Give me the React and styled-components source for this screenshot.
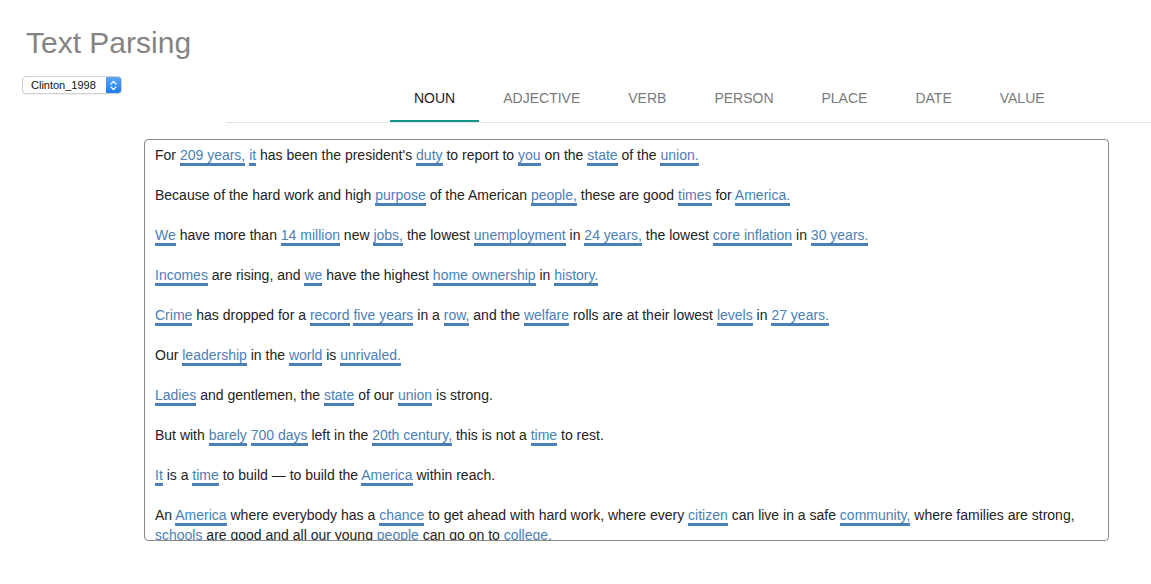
import React from 'react';
import styled, { createGlobalStyle } from 'styled-components';

const GlobalStyle = createGlobalStyle`
  html, body {
    margin: 0;
    padding: 0;
    background: #fff;
    font-family: "Liberation Sans", Arial, Helvetica, sans-serif;
  }
`;

const TABS = ['NOUN', 'ADJECTIVE', 'VERB', 'PERSON', 'PLACE', 'DATE', 'VALUE'];

// words in [brackets] are tagged with the active part of speech
const SPEECH = [
  "For [209 years,] [it] has been the president's [duty] to report to [you] on the [state] of the [union.]",
  'Because of the hard work and high [purpose] of the American [people,] these are good [times] for [America.]',
  '[We] have more than [14 million] new [jobs,] the lowest [unemployment] in [24 years,] the lowest [core inflation] in [30 years.]',
  '[Incomes] are rising, and [we] have the highest [home ownership] in [history.]',
  '[Crime] has dropped for a [record] [five years] in a [row,] and the [welfare] rolls are at their lowest [levels] in [27 years.]',
  'Our [leadership] in the [world] is [unrivaled.]',
  '[Ladies] and gentlemen, the [state] of our [union] is strong.',
  'But with [barely] [700 days] left in the [20th century,] this is not a [time] to rest.',
  '[It] is a [time] to build \u2014 to build the [America] within reach.',
  'An [America] where everybody has a [chance] to get ahead with hard work, where every [citizen] can live in a safe [community,] where families are strong, [schools] are good and all our young [people] can go on to [college.]',
  'We have moved past the sterile debate between those who say government is the enemy and those who say government is the answer.',
];

const Page = styled.div`
  padding: 25px 0 0 22px;
`;

const Title = styled.h1`
  margin: 0 0 13px 4px;
  font-size: 30px;
  line-height: 36px;
  font-weight: 400;
  color: #848484;
`;

const Toolbar = styled.div`
  display: flex;
  align-items: flex-start;
`;

const SideCol = styled.div`
  width: 204px;
  padding-top: 2px;
`;

const SelectBox = styled.div`
  display: flex;
  align-items: stretch;
  width: 98px;
  height: 16px;
  border: 1px solid #cfcfcf;
  border-radius: 4px;
  background: #fff;
  box-shadow: 0 1px 1px rgba(0, 0, 0, 0.06);
  overflow: hidden;
`;

const SelectLabel = styled.span`
  flex: 1;
  padding-left: 8px;
  font-size: 11px;
  line-height: 16px;
  color: #111;
`;

const Stepper = styled.span`
  width: 15px;
  display: flex;
  align-items: center;
  justify-content: center;
  background: linear-gradient(#5aa6fb, #1c7cf2);
`;

const TabBar = styled.div`
  flex: 1;
  display: flex;
  padding-left: 164px;
  border-bottom: 1px solid #e3e3e3;
`;

const Tab = styled.div`
  height: 44px;
  padding: 2px 24px 0;
  display: flex;
  align-items: center;
  font-size: 14px;
  color: ${(p) => (p.$active ? '#222' : '#7a7a7a')};
  border-bottom: 2px solid ${(p) => (p.$active ? '#109688' : 'transparent')};
`;

const TextPanel = styled.div`
  margin: 16px 0 0 122px;
  width: 943px;
  height: 390px;
  padding: 5px 10px;
  border: 1px solid #8a8a8a;
  border-radius: 4px;
  overflow: hidden;
`;

const Paragraph = styled.p`
  margin: 0 0 20px;
  font-size: 14px;
  line-height: 20px;
  color: #222;
`;

const Tagged = styled.span`
  color: #4a80b6;
  border-bottom: 3px solid #4a7fb3;
`;

const StepperIcon = () => (
  <svg width="7" height="11" viewBox="0 0 7 11" fill="none" stroke="#fff" strokeWidth="1.2" strokeLinecap="round" strokeLinejoin="round">
    <path d="M1 4 L3.5 1.5 L6 4" />
    <path d="M1 7 L3.5 9.5 L6 7" />
  </svg>
);

const renderLine = (line) =>
  line.split(/(\[[^\]]+\])/).map((part, i) =>
    part.startsWith('[') ? <Tagged key={i}>{part.slice(1, -1)}</Tagged> : part
  );

export default function App() {
  return (
    <>
      <GlobalStyle />
      <Page>
        <Title>Text Parsing</Title>
        <Toolbar>
          <SideCol>
            <SelectBox>
              <SelectLabel>Clinton_1998</SelectLabel>
              <Stepper>
                <StepperIcon />
              </Stepper>
            </SelectBox>
          </SideCol>
          <TabBar>
            {TABS.map((t, i) => (
              <Tab key={t} $active={i === 0}>{t}</Tab>
            ))}
          </TabBar>
        </Toolbar>
        <TextPanel>
          {SPEECH.map((line, i) => (
            <Paragraph key={i}>{renderLine(line)}</Paragraph>
          ))}
        </TextPanel>
      </Page>
    </>
  );
}
